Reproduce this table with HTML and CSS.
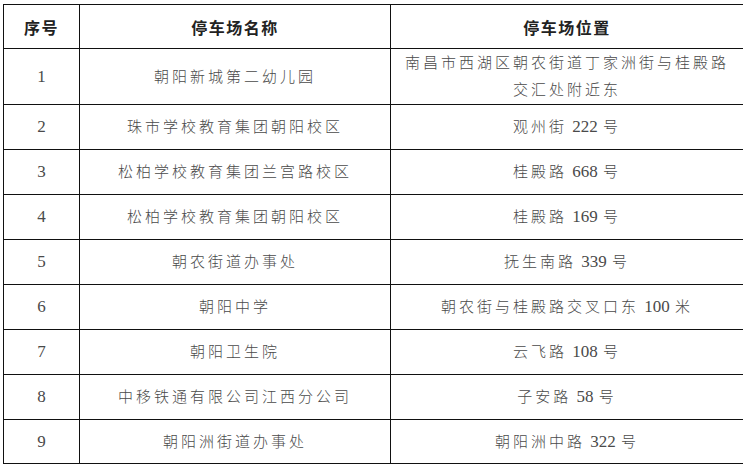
FILE: index.html
```html
<!DOCTYPE html>
<html lang="zh-CN">
<head>
<meta charset="utf-8">
<link rel="stylesheet" href="styles.css">
</head>
<body>
<table class="parking">
  <colgroup>
    <col class="c-num">
    <col class="c-name">
    <col class="c-loc">
  </colgroup>
  <thead>
    <tr class="head-row">
      <th>序号</th>
      <th>停车场名称</th>
      <th>停车场位置</th>
    </tr>
  </thead>
  <tbody>
    <tr class="tall-row">
      <td class="num">1</td>
      <td>朝阳新城第二幼儿园</td>
      <td class="two-line">南昌市西湖区朝农街道丁家洲街与桂殿路<br>交汇处附近东</td>
    </tr>
    <tr><td class="num">2</td><td>珠市学校教育集团朝阳校区</td><td>观州街<span class="n"> 222 </span>号</td></tr>
    <tr><td class="num">3</td><td>松柏学校教育集团兰宫路校区</td><td>桂殿路<span class="n"> 668 </span>号</td></tr>
    <tr><td class="num">4</td><td>松柏学校教育集团朝阳校区</td><td>桂殿路<span class="n"> 169 </span>号</td></tr>
    <tr><td class="num">5</td><td>朝农街道办事处</td><td>抚生南路<span class="n"> 339 </span>号</td></tr>
    <tr><td class="num">6</td><td>朝阳中学</td><td>朝农街与桂殿路交叉口东<span class="n"> 100 </span>米</td></tr>
    <tr><td class="num">7</td><td>朝阳卫生院</td><td>云飞路<span class="n"> 108 </span>号</td></tr>
    <tr><td class="num">8</td><td>中移铁通有限公司江西分公司</td><td>子安路<span class="n"> 58 </span>号</td></tr>
    <tr class="last-row"><td class="num">9</td><td>朝阳洲街道办事处</td><td>朝阳洲中路<span class="n"> 322 </span>号</td></tr>
  </tbody>
</table>
</body>
</html>
```

FILE: styles.css
```css
html, body {
  margin: 0;
  padding: 0;
  background: #ffffff;
}

body {
  padding: 4px 0 0 3px;
}

.parking {
  border-collapse: collapse;
  table-layout: fixed;
  width: 740px;
  font-family: "Liberation Serif", "Noto Sans CJK SC", serif;
  color: #4a4a4a;
}

.c-num { width: 76px; }
.c-name { width: 311px; }
.c-loc { width: 353px; }

.parking th,
.parking td {
  border: 1px solid #111111;
  text-align: center;
  vertical-align: middle;
  padding: 0 8px;
}

.parking th {
  font-size: 16px;
  font-weight: 700;
  letter-spacing: 1.5px;
  color: #222222;
  height: 43px;
}

.parking td {
  font-size: 15px;
  font-weight: 300;
  letter-spacing: 3px;
  height: 44px;
  line-height: 20px;
}

.parking td.num {
  font-size: 17px;
  font-weight: 400;
  letter-spacing: 0;
}

.parking .n {
  font-family: "Liberation Serif", serif;
  font-weight: 400;
  font-size: 17px;
  letter-spacing: 0;
  word-spacing: 1px;
}

.parking .tall-row td {
  height: 55px;
}

.parking td.two-line {
  line-height: 27px;
}

.parking .last-row td {
  height: 43px;
}
```
